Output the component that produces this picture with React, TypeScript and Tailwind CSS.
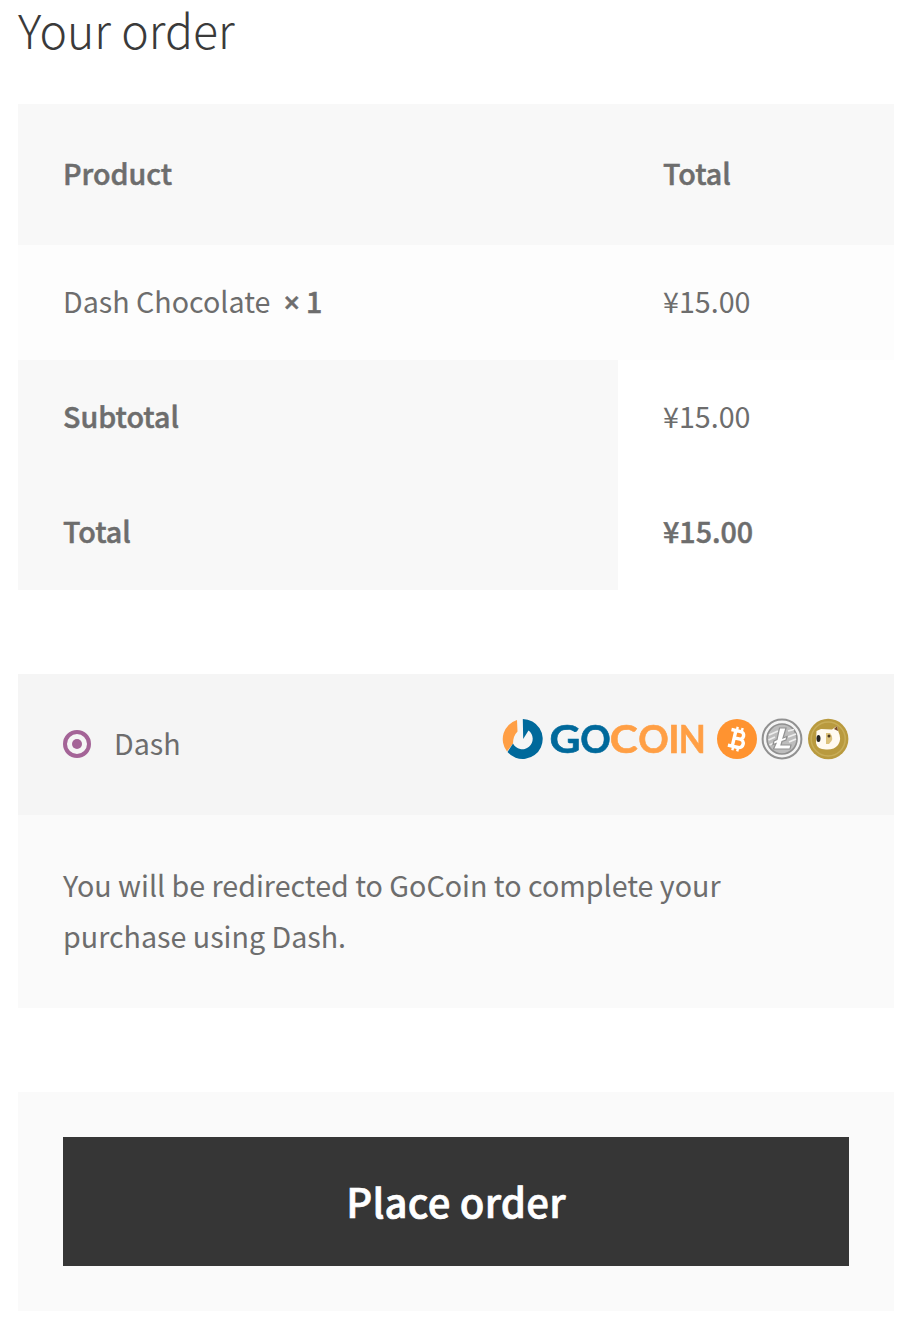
import type { ReactNode } from "react";

function Row({ label, value, strong = false }: { label: ReactNode; value: string; strong?: boolean }) {
  return (
    <tr className="h-[115px]">
      <th scope="row" className="bg-[#f8f8f8] pb-[2px] pl-[45px] text-left font-medium [-webkit-text-stroke:0.5px]">{label}</th>
      <td className={strong ? "pb-[2px] pl-[45px] font-medium [-webkit-text-stroke:0.5px]" : "pb-[2px] pl-[45px]"}>{value}</td>
    </tr>
  );
}

function GoCoinLogo() {
  return (
    <svg className="overflow-visible blur-[0.4px]" width="347" height="42" viewBox="503 718 347 42" role="img" aria-label="GoCoin">
      <path d="M517 720A20 20 0 0 0 507 751.500L513 743.500Q513 736 517.500 731.500Z" fill="#ff9f45" />
      <path d="M522.800 719A20 20 0 1 1 507.500 752L513 743.500A10.400 10.400 0 1 0 528.500 730.500L523.200 739Z" fill="#00699b" />
      <g className="font-['Lato',sans-serif] font-bold" fontSize="38">
        <text x="549.500" y="753" textLength="31" lengthAdjust="spacingAndGlyphs" fill="#00699b" stroke="#00699b" strokeWidth="0.6">G</text>
        <text x="580.200" y="753" textLength="30.500" lengthAdjust="spacingAndGlyphs" fill="#00699b" stroke="#00699b" strokeWidth="0.6">O</text>
        <text x="609.800" y="753" textLength="28" lengthAdjust="spacingAndGlyphs" fill="#ff9f45" stroke="#ff9f45" strokeWidth="0.6">C</text>
        <text x="638.300" y="753" textLength="30.500" lengthAdjust="spacingAndGlyphs" fill="#ff9f45" stroke="#ff9f45" strokeWidth="0.6">O</text>
        <text x="668.300" y="753" fill="#ff9f45" stroke="#ff9f45" strokeWidth="0.6">I</text>
        <text x="678.800" y="753" textLength="27" lengthAdjust="spacingAndGlyphs" fill="#ff9f45" stroke="#ff9f45" strokeWidth="0.6">N</text>
      </g>
      <circle cx="737" cy="739" r="20" fill="#ff9330" />
      <g transform="rotate(13 737 739)" fill="none" stroke="#fff" strokeWidth="3.400">
        <path d="M734 731V747M729.500 731H739C744 731 744 738.500 739 738.500H734H740C745.500 738.500 745.500 747 740 747H729.500" />
        <path d="M735 727V731M740 727V731M735 747V751M740 747V751" strokeWidth="2.400" />
      </g>
      <circle cx="782" cy="739" r="19.400" fill="#f4f4f4" stroke="#919191" strokeWidth="2" />
      <circle cx="782" cy="739" r="15" fill="#bdbdbd" stroke="#8f8f8f" strokeWidth="1.600" />
      <path d="M769 735L778 731M768.500 740L775 737M788 731L794 729.500M788 737L796 734M789 742L796 739M769.500 745L774 743" stroke="#eee" strokeWidth="1.800" />
      <path d="M779.500 728H786L783 738L787 736.500L786 740L782 741.500L781 745H791L790 749H773.500L776 743.500L773 744.500L774 741L777 739.500Z" fill="#fff" stroke="#929292" strokeWidth="1.200" />
      <circle cx="828.200" cy="739" r="20.200" fill="#b99a3e" />
      <circle cx="828.200" cy="739" r="17" fill="none" stroke="#c8ad58" strokeWidth="1.500" />
      <path d="M816.500 731L821 729L832 729.500L837 726L838.500 732Q842 739 838 745Q834 750 826 749.500Q817 749.500 816 743Z" fill="#fffaf0" />
      <path d="M826 733H830Q835 739 829 744H826Z" fill="#dcc27c" />
      <ellipse cx="818.500" cy="738.500" rx="2" ry="3.500" fill="#222" />
      <circle cx="829" cy="736" r="1.500" fill="#4a3820" />
      <path d="M834 729L837 726L838 731Z" fill="#7a4a24" />
    </svg>
  );
}

export default function App() {
  return (
    <main className="min-h-[1324px] bg-white pr-[15px] pl-[18px] font-['Noto_Sans_CJK_SC','Noto_Sans',sans-serif] text-[28.65px] text-[#6d6d6d]">
      <h1 className="flex h-[104px] items-start text-[46.4px] leading-[58px] font-light text-[#3a3a3a]">Your order</h1>
      <table className="w-full table-fixed border-collapse">
        <colgroup>
          <col className="w-[600px]" />
          <col />
        </colgroup>
        <thead>
          <tr className="h-[141px] bg-[#f8f8f8] text-left [-webkit-text-stroke:0.5px]">
            <th className="pb-[2px] pl-[45px] font-medium">Product</th>
            <th className="pb-[2px] pl-[45px] font-medium">Total</th>
          </tr>
        </thead>
        <tbody>
          <tr className="h-[115px] bg-[#fdfdfd]">
            <td className="pb-[2px] pl-[45px]">
              Dash Chocolate
              <strong className="ml-[13px] font-medium [-webkit-text-stroke:0.5px]">
                <span className="mr-[6px] font-['Open_Sans',sans-serif] text-[29px] leading-none font-semibold">×</span>1
              </strong>
            </td>
            <td className="pb-[2px] pl-[45px]">¥15.00</td>
          </tr>
          <Row label="Subtotal" value="¥15.00" />
          <Row label="Total" value="¥15.00" strong />
        </tbody>
      </table>
      <section className="mt-[84px]">
        <div className="flex h-[141px] justify-between bg-[#f5f5f5] pr-[44px] pl-[45px]">
          <label className="flex items-center pb-[2px]">
            <span className="mr-[23px] flex size-[28px] items-center justify-center rounded-full border-4 border-[#a46497]">
              <span className="size-[10px] rounded-full bg-[#a46497]" />
            </span>
            Dash
          </label>
          <div className="pt-11">
            <GoCoinLogo />
          </div>
        </div>
        <p className="h-[193px] bg-[#fafafa] px-[45px] pt-[44px] leading-[51px]">
          You will be redirected to GoCoin to complete your<br />purchase using Dash.
        </p>
      </section>
      <div className="mt-[84px] h-[219px] bg-[#fafafa] p-[45px]">
        <button className="h-[129px] w-full bg-[#363636] text-[40.1px] font-medium tracking-[0.2px] text-white [-webkit-text-stroke:0.7px]">Place order</button>
      </div>
    </main>
  );
}
